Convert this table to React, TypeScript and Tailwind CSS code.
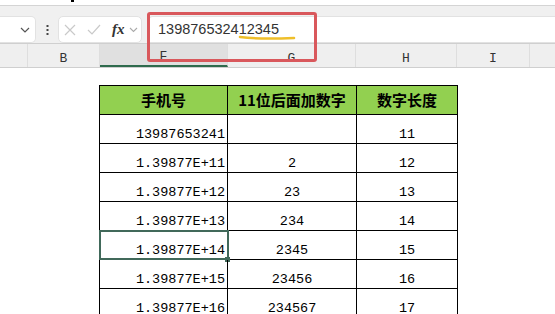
import React from "react";

const rows: [string, string, string][] = [
  ["13987653241", "", "11"],
  ["1.39877E+11", "2", "12"],
  ["1.39877E+12", "23", "13"],
  ["1.39877E+13", "234", "14"],
  ["1.39877E+14", "2345", "15"],
  ["1.39877E+15", "23456", "16"],
  ["1.39877E+16", "234567", "17"],
];

const colHeads = [
  { label: "", w: "w-[28px]" },
  { label: "B", w: "w-[72px]" },
  { label: "F", w: "w-[128px]", active: true },
  { label: "G", w: "w-[128px]" },
  { label: "H", w: "w-[101px]" },
  { label: "I", w: "w-[73px]" },
  { label: "", w: "w-[40px]" },
];

const mono = { fontFamily: '"Liberation Mono", "DejaVu Sans Mono", monospace' };

export default function App() {
  return (
    <div className="relative h-[314px] w-[555px] overflow-hidden bg-white">
      {/* top strip */}
      <div className="relative h-[5px] bg-white">
        <div className="absolute left-[71px] top-0 h-[2px] w-[3px] bg-black" />
      </div>
      <div className="h-px bg-[#d4d4d4]" />

      {/* formula bar */}
      <div className="flex h-[37px] items-end gap-[6px] bg-[#f0f0f0] pt-[9px]">
        <div className="flex h-[27px] w-[36px] items-center justify-end rounded-r-[5px] border border-l-0 border-[#e2e2e2] bg-white pr-[5px]">
          <svg width="10" height="6" viewBox="0 0 10 6">
            <path d="M1 1 L5 5 L9 1" fill="none" stroke="#555" strokeWidth="1.2" />
          </svg>
        </div>
        <div className="flex h-[27px] w-[10px] items-center justify-center">
          <svg width="3" height="10" viewBox="0 0 3 10">
            <rect x="0.5" y="0" width="2" height="2" fill="#444" />
            <rect x="0.5" y="4" width="2" height="2" fill="#444" />
            <rect x="0.5" y="8" width="2" height="2" fill="#444" />
          </svg>
        </div>
        <div className="flex h-[27px] w-[84px] items-center gap-[11px] rounded-[5px] border border-[#e2e2e2] bg-white pl-[5px]">
          <svg width="12" height="12" viewBox="0 0 12 12">
            <path d="M1 1 L11 11 M11 1 L1 11" stroke="#c9c9c9" strokeWidth="1.2" />
          </svg>
          <svg width="14" height="11" viewBox="0 0 14 11">
            <path d="M1 6 L5 10 L13 1" fill="none" stroke="#c9c9c9" strokeWidth="1.2" />
          </svg>
          <div className="flex items-center gap-[4px]">
            <span
              className="text-[15px] font-bold italic leading-none text-[#333]"
              style={{ fontFamily: '"Liberation Serif", serif' }}
            >
              fx
            </span>
            <svg width="9" height="6" viewBox="0 0 9 6">
              <path d="M1 1 L4.5 4.5 L8 1" fill="none" stroke="#aaa" strokeWidth="1.1" />
            </svg>
          </div>
        </div>
        <div className="flex h-[27px] flex-1 items-center rounded-tl-[5px] border border-r-0 border-[#e2e2e2] bg-white pl-[9px]">
          <span
            className="text-[14.5px] leading-none text-[#333]"
            style={{ fontFamily: '"Liberation Sans", Arial, sans-serif' }}
          >
            139876532412345
          </span>
        </div>
      </div>

      {/* column headers */}
      <div className="flex h-[25px] border-t border-b border-[#cfcfcf] bg-[#efefef]">
        {colHeads.map((c, i) => (
          <div
            key={i}
            className={`${c.w} flex shrink-0 items-end justify-center border-r border-[#dedede] pb-[2px] text-[13px] leading-none text-[#333] ${
              c.active ? "border-b-2 border-b-[#2f6b4d] bg-[#e0e0e0]" : ""
            }`}
            style={mono}
          >
            {c.label}
          </div>
        ))}
      </div>

      {/* sheet */}
      <div className="flex pl-[99px] pt-[17px]">
        <div className="border-l border-t border-black">
          <div className="flex h-[29px] bg-[#92d050]">
            {["手机号", "11位后面加数字", "数字长度"].map((h, i) => (
              <div
                key={h}
                className={`${["w-[128px]", "w-[129px]", "w-[101px]"][i]} flex items-center justify-center border-b border-r border-black text-[15px] font-bold text-black`}
                style={{ fontFamily: '"Noto Sans CJK SC", "Noto Sans", sans-serif' }}
              >
                {h}
              </div>
            ))}
          </div>
          {rows.map((r, i) => (
            <div key={i} className="flex h-[29px] text-[13.5px] leading-none text-black" style={mono}>
              <div className="relative flex w-[128px] items-end justify-end border-b border-r border-black pb-[2px] pr-[2px]">
                {r[0]}
                {i === 4 && (
                  <>
                    <div className="absolute -left-px -top-px h-[30px] w-[130px] border-2 border-[#41695a]" />
                    <div className="absolute -bottom-[3px] -right-[3px] h-[5px] w-[5px] bg-[#41695a]" />
                  </>
                )}
              </div>
              <div className="flex w-[129px] items-end justify-center border-b border-r border-black pb-[2px]">
                {r[1]}
              </div>
              <div className="flex w-[101px] items-end justify-center border-b border-r border-black pb-[2px]">
                {r[2]}
              </div>
            </div>
          ))}
        </div>
      </div>

      {/* annotation overlays */}
      <div className="absolute left-[147px] top-[12px] h-[50px] w-[170px] rounded-[3px] border-[3px] border-[#d9585c]" />
      <svg className="absolute left-[238px] top-[34px]" width="58" height="7" viewBox="0 0 58 7">
        <path d="M2 3 Q20 5.5 56 4" fill="none" stroke="#efbf2a" strokeWidth="2.6" strokeLinecap="round" />
      </svg>
    </div>
  );
}
